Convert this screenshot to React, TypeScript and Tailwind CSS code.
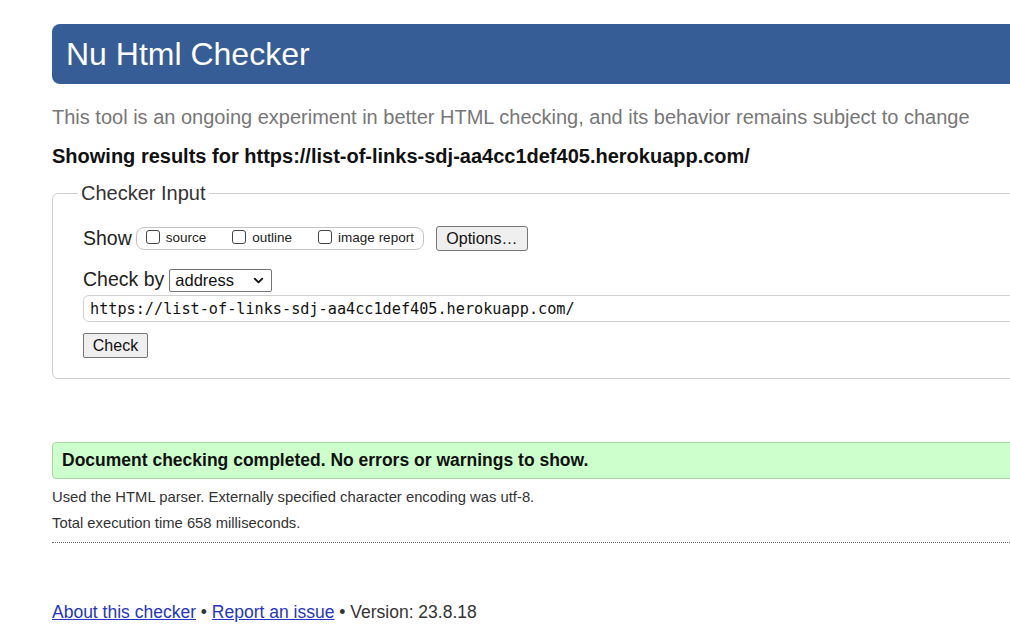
import { ChevronDown } from "lucide-react";

const url = "https://list-of-links-sdj-aa4cc1def405.herokuapp.com/";

function ShowOption({ label }: { label: string }) {
  return (
    <label className="flex items-center gap-[6px] text-[13.5px] text-[#222]">
      <span className="mb-[4px] inline-block h-[14px] w-[14px] rounded-[3px] border border-[#444] bg-white" />
      <span>{label}</span>
    </label>
  );
}

export default function App() {
  return (
    <div
      className="h-[639px] w-[1010px] overflow-hidden bg-white text-[#222]"
      style={{ fontFamily: '"Liberation Sans", Arial, sans-serif' }}
    >
      <div className="ml-[52px] w-[1100px] pt-[24px]">
        <div className="flex h-[60px] items-center rounded-l-[8px] bg-[#365d95] pl-[14px]">
          <h1 className="text-[32px] leading-none text-white">Nu Html Checker</h1>
        </div>

        <p className="mt-[21px] text-[20px] leading-[24px] text-[#777]">
          This tool is an ongoing experiment in better HTML checking, and its behavior remains subject to change
        </p>

        <p className="mt-[15px] text-[20px] font-bold leading-[24px] text-[#111]">
          Showing results for {url}
        </p>

        <fieldset className="mt-[13px] rounded-[6px] border border-[#cfcfcf] px-[25px] pb-[20px]">
          <legend className="px-[3px] text-[20px] leading-[24px] text-[#333]">Checker Input</legend>

          <div className="pl-[5px]">
            <div className="mt-[21px] flex h-[25px] items-center">
              <span className="text-[19.5px] leading-none text-[#222]">Show</span>
              <div className="ml-[4px] flex h-[23px] items-center gap-[26px] rounded-[8px] border border-[#c4c4c4] pl-[9px] pr-[9px]">
                <ShowOption label="source" />
                <ShowOption label="outline" />
                <ShowOption label="image report" />
              </div>
              <button
                className="ml-[12px] h-[25px] w-[92px] rounded-[3px] border border-[#767676] bg-[#efefef] text-[16px] text-[#111]"
                type="button"
              >
                Options…
              </button>
            </div>

            <div className="mt-[17px] flex h-[24px] items-center">
              <span className="text-[19.5px] leading-none text-[#222]">Check by</span>
              <div className="ml-[5px] flex h-[23px] w-[103px] items-center justify-between rounded-[2px] border border-[#767676] bg-white pl-[5px] pr-[5px] text-[16.5px] text-[#111]">
                <span>address</span>
                <ChevronDown className="h-[15px] w-[15px]" strokeWidth={3} />
              </div>
            </div>

            <div className="mt-[3px] flex h-[27px] w-[1000px] items-center rounded-[6px] border border-[#d0d0d0] pl-[6px] pt-[2px]">
              <span
                className="text-[15.2px] text-[#111]"
                style={{ fontFamily: '"DejaVu Sans Mono", monospace' }}
              >
                {url}
              </span>
            </div>

            <button
              className="mt-[11px] h-[25px] w-[65px] rounded-[2px] border border-[#767676] bg-[#efefef] text-[16px] text-[#111]"
              type="button"
            >
              Check
            </button>
          </div>
        </fieldset>

        <div className="mt-[63px] flex h-[37px] items-center rounded-[4px] border border-[#a9d6a0] bg-[#ccffcc] pl-[9px]">
          <span className="text-[17.5px] font-bold text-[#111]">
            Document checking completed. No errors or warnings to show.
          </span>
        </div>

        <p className="mt-[9px] text-[14.8px] leading-[19px] text-[#333]">
          Used the HTML parser. Externally specified character encoding was utf-8.
        </p>
        <p className="mt-[7px] text-[14.8px] leading-[19px] text-[#333]">Total execution time 658 milliseconds.</p>
        <div className="border-b border-dotted border-[#666] pt-[9px]" />

        <p className="mt-[58px] text-[17.5px] leading-[22px] text-[#333]">
          <a className="text-[#2436c0] underline" href="#">
            About this checker
          </a>
          {" • "}
          <a className="text-[#2436c0] underline" href="#">
            Report an issue
          </a>
          {" • Version: 23.8.18"}
        </p>
      </div>
    </div>
  );
}
